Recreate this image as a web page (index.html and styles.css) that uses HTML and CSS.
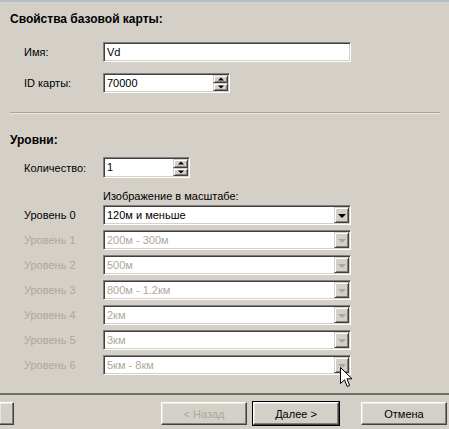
FILE: index.html
```html
<!DOCTYPE html>
<html lang="ru">
<head>
    <meta charset="UTF-8">
    <title>Свойства базовой карты</title>
    <link rel="stylesheet" href="styles.css">
</head>
<body>
    <div class="wizard">
        <div class="page">
            <h3>Свойства базовой карты:</h3>
            <div class="row first">
                <label>Имя:</label>
                <div class="field wide">Vd</div>
            </div>
            <div class="row">
                <label>ID карты:</label>
                <div class="field spin id">70000
                    <div class="spin-btns"><span class="up"></span><span class="down"></span></div>
                </div>
            </div>
            <hr class="sep">

            <h3>Уровни:</h3>
            <div class="row count">
                <label>Количество:</label>
                <div class="field spin qty">1
                    <div class="spin-btns"><span class="up"></span><span class="down"></span></div>
                </div>
            </div>
            <div class="row caption">
                <label></label>
                <span>Изображение в масштабе:</span>
            </div>
            <div class="levels">
                <div class="row level">
                    <label>Уровень 0</label>
                    <div class="field combo">120м и меньше<span class="drop"></span></div>
                </div>
                <div class="row level off">
                    <label>Уровень 1</label>
                    <div class="field combo">200м - 300м<span class="drop"></span></div>
                </div>
                <div class="row level off">
                    <label>Уровень 2</label>
                    <div class="field combo">500м<span class="drop"></span></div>
                </div>
                <div class="row level off">
                    <label>Уровень 3</label>
                    <div class="field combo">800м - 1.2км<span class="drop"></span></div>
                </div>
                <div class="row level off">
                    <label>Уровень 4</label>
                    <div class="field combo">2км<span class="drop"></span></div>
                </div>
                <div class="row level off">
                    <label>Уровень 5</label>
                    <div class="field combo">3км<span class="drop"></span></div>
                </div>
                <div class="row level off">
                    <label>Уровень 6</label>
                    <div class="field combo">5км - 8км<span class="drop"></span></div>
                </div>
            </div>
        </div>
        <div class="footer">
            <button class="stub"></button>
            <div class="nav">
                <button class="off">&lt; Назад</button>
                <button class="default">Далее &gt;</button>
                <button class="cancel">Отмена</button>
            </div>
        </div>
    </div>
    <svg class="pointer" width="13" height="22" viewBox="0 0 13 22">
        <path d="M0.5 0.5 L0.5 16.5 L4.5 12.8 L7.2 19.5 L9.6 18.5 L7 11.8 L12 11.8 Z" fill="#fff" stroke="#000" stroke-width="1"/>
    </svg>
</body>
</html>
```

FILE: styles.css
```css
body {
    margin: 0;
    background: #d4d0c8;
    font-family: "Liberation Sans", Arial, sans-serif;
    font-size: 11px;
    color: #000;
}
.wizard {
    position: relative;
    width: 449px;
    height: 429px;
    border-top: 2px solid #b4bccb;
    box-sizing: border-box;
    overflow: hidden;
}
.page {
    height: 391px;
    padding: 10px 0 0 10px;
    box-sizing: border-box;
}
h3 {
    margin: 0;
    font-size: 12px;
    font-weight: bold;
    height: 14px;
    line-height: 14px;
}
.row {
    display: grid;
    grid-template-columns: 79px auto;
    align-items: center;
    padding-left: 14px;
    margin-top: 11px;
}
.row.first {
    margin-top: 16px;
}
.row label {
    line-height: 14px;
}
.field {
    position: relative;
    height: 20px;
    line-height: 18px;
    padding-left: 3px;
    box-sizing: border-box;
    background: #fff;
    border: 1px solid;
    border-color: #808080 #fff #fff #808080;
    box-shadow: inset 1px 1px #404040, inset -1px -1px #d4d0c8;
    font-size: 11px;
}
.wide {
    width: 248px;
}
.id {
    width: 127px;
}
.qty {
    width: 87px;
    height: 21px;
}
.spin-btns {
    position: absolute;
    top: 1px;
    right: 1px;
    bottom: 1px;
    width: 15px;
    display: flex;
    flex-direction: column;
}
.spin-btns span,
.drop {
    position: relative;
    flex: 1;
    background: #d4d0c8;
    border: 1px solid;
    border-color: #d4d0c8 #404040 #404040 #d4d0c8;
    box-shadow: inset 1px 1px #fff, inset -1px -1px #808080;
}
.spin-btns span::after,
.drop::after {
    content: "";
    position: absolute;
    left: 50%;
    top: 50%;
    border-left: 3px solid transparent;
    border-right: 3px solid transparent;
    transform: translate(-50%, -50%);
}
.spin-btns .up::after {
    border-bottom: 3px solid #000;
}
.spin-btns .down::after {
    border-top: 3px solid #000;
}
.sep {
    margin: 19px 9px 0 0;
    border: 0;
    border-top: 1px solid #a9a59d;
    border-bottom: 1px solid #ece9e2;
}
.sep + h3 {
    margin-top: 19px;
}
.page h3 + .row.count {
    margin-top: 10px;
}
.row.caption {
    margin-top: 12px;
}
.levels {
    display: flex;
    flex-direction: column;
    gap: 5px;
    margin-top: 3px;
}
.levels .row {
    margin-top: 0;
}
.combo {
    width: 248px;
}
.drop {
    position: absolute;
    top: 1px;
    right: 1px;
    bottom: 1px;
    width: 15px;
    box-sizing: border-box;
}
.drop::after {
    border-left-width: 4px;
    border-right-width: 4px;
    border-top: 4px solid #000;
    margin-top: 1px;
}
.level.off {
    color: #aca899;
}
.level.off .drop::after {
    border-top-color: #aca899;
}
.footer {
    border-top: 2px solid #6f6d68;
    height: 36px;
    display: flex;
    justify-content: space-between;
    padding-top: 7px;
    box-sizing: border-box;
}
button {
    height: 23px;
    width: 86px;
    font-family: "Liberation Sans", Arial, sans-serif;
    font-size: 11px;
    color: #000;
    background: #d4d0c8;
    border: 1px solid;
    border-color: #fff #404040 #404040 #fff;
    box-shadow: inset -1px -1px #808080, inset 1px 1px #e8e6e0;
    padding: 0;
}
.stub {
    width: 14px;
    border-left: 0;
}
.nav {
    display: flex;
    gap: 6px;
    padding-right: 2px;
}
.nav .off {
    color: #aca899;
}
.nav .default {
    outline: 1px solid #000;
    outline-offset: 0;
    margin-right: 16px;
}
.pointer {
    position: absolute;
    left: 340px;
    top: 367px;
}
```
